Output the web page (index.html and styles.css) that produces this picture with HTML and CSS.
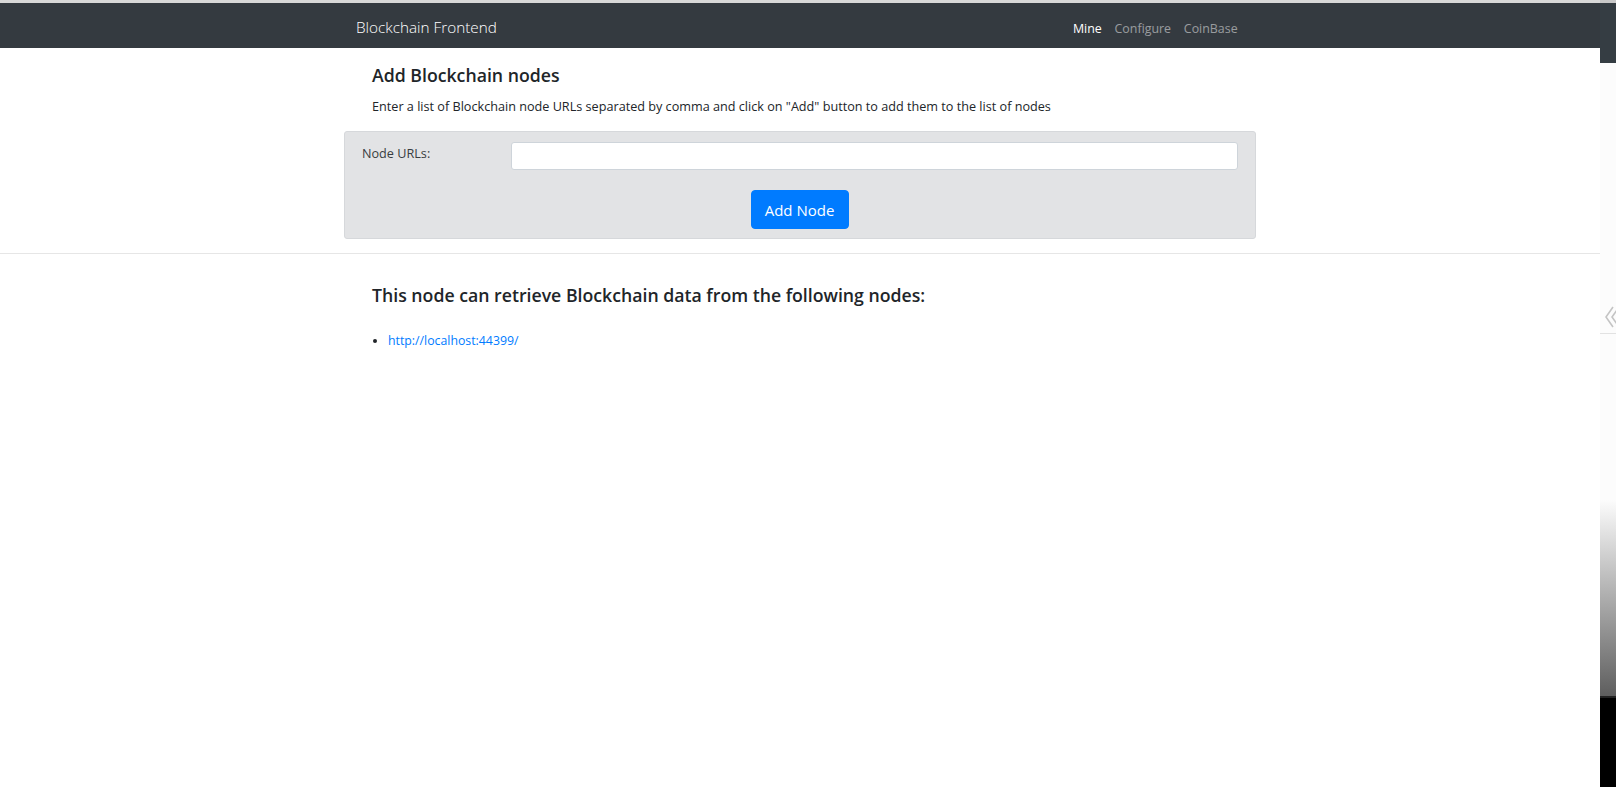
FILE: index.html
```html
<!DOCTYPE html>
<html lang="en">
<head>
<meta charset="utf-8">
<title>Blockchain Frontend</title>
<link rel="stylesheet" href="styles.css">
</head>
<body>
<div class="page">
  <div class="main">
    <nav class="navbar">
      <div class="nav-inner">
        <a class="brand" href="#">Blockchain Frontend</a>
        <ul class="nav-links">
          <li><a class="nav-link active" href="#">Mine</a></li>
          <li><a class="nav-link" href="#">Configure</a></li>
          <li><a class="nav-link" href="#">CoinBase</a></li>
        </ul>
      </div>
    </nav>

    <div class="container">
      <div class="intro">
        <h4 class="title">Add Blockchain nodes</h4>
        <p class="lead-text">Enter a list of Blockchain node URLs separated by comma and click on "Add" button to add them to the list of nodes</p>
      </div>
      <div class="panel">
        <div class="form-row">
          <label class="form-label" for="nodes">Node URLs:</label>
          <div class="form-field"><input class="form-input" id="nodes" type="text"></div>
        </div>
        <div class="form-actions">
          <button class="btn-primary" type="button">Add Node</button>
        </div>
      </div>
    </div>

    <hr class="divider">

    <div class="container">
      <div class="nodes">
        <h4 class="title">This node can retrieve Blockchain data from the following nodes:</h4>
        <ul class="node-list">
          <li><a href="#">http://localhost:44399/</a></li>
        </ul>
      </div>
    </div>
  </div>

  <aside class="side-strip">
    <div class="strip-top"></div>
    <div class="strip-light">
      <div class="strip-chevron">
        <svg width="16" height="24" viewBox="0 0 16 24"><path d="M8 2 L1 12 L8 22" fill="none" stroke="#c4c4c4" stroke-width="1.6"/><path d="M14 2 L7 12 L14 22" fill="none" stroke="#c4c4c4" stroke-width="1.6"/></svg>
      </div>
      <div class="strip-line"></div>
    </div>
    <div class="strip-gradient"></div>
    <div class="strip-dark"></div>
  </aside>
</div>
</body>
</html>
```

FILE: styles.css
```css
* { box-sizing: border-box; }
html, body { margin: 0; padding: 0; }
body {
  font-family: "Open Sans", "Noto Sans", "Liberation Sans", sans-serif;
  color: #212529;
  background: #fff;
  font-size: 12.65px;
  line-height: 1.5;
}
.page {
  display: flex;
  height: 787px;
  overflow: hidden;
}
.main {
  flex: 1;
  min-width: 0;
  border-top: 3px solid #d8d8d8;
}
.navbar {
  background: #343a40;
  height: 45px;
  display: flex;
  align-items: center;
}
.nav-inner {
  width: 912px;
  margin: 0 auto;
  padding: 0 12px;
  display: flex;
  align-items: center;
  justify-content: space-between;
}
.brand {
  color: #fff;
  text-decoration: none;
  font-size: 15.3px;
  font-weight: 300;
  padding-top: 3px;
}
.nav-links {
  list-style: none;
  margin: 0;
  padding: 8px 0 0;
  display: flex;
}
.nav-link {
  display: block;
  padding: 0 6.4px;
  color: rgba(255,255,255,.5);
  text-decoration: none;
  font-size: 12.4px;
}
.nav-link.active { color: #fff; }

.container {
  width: 912px;
  margin: 0 auto;
}
.intro, .nodes {
  padding-left: 28px;
}
.title {
  margin: 16px 0 10px;
  font-size: 17.7px;
  font-weight: 600;
  line-height: 23px;
  color: #212529;
}
.lead-text {
  margin: 0 0 15px;
  line-height: 19px;
}
.panel {
  background: #e2e3e5;
  border: 1px solid #d6d8db;
  border-radius: 3px;
  padding: 10px 17px 9px 16px;
}
.form-row {
  display: flex;
  align-items: center;
}
.form-label {
  width: 150px;
  flex: none;
  color: #383d41;
  padding-left: 1px;
  margin-top: -6px;
}
.form-field { flex: 1; }
.form-input {
  display: block;
  width: 100%;
  height: 28px;
  border: 1px solid #ced4da;
  border-radius: 3px;
  background: #fff;
  font: inherit;
  padding: 0 10px;
}
.form-actions {
  display: flex;
  justify-content: center;
  margin-top: 20px;
}
.btn-primary {
  background: #007bff;
  border: 1px solid #007bff;
  color: #fff;
  font-family: inherit;
  font-size: 15px;
  line-height: 24px;
  height: 39px;
  width: 98px;
  padding: 0;
  border-radius: 4px;
  cursor: pointer;
}
.divider {
  border: 0;
  border-top: 1px solid #e6e6e6;
  margin: 14px 0 0;
}
.nodes .title {
  margin-top: 30px;
  margin-bottom: 24px;
}
.node-list {
  margin: 0;
  padding-left: 16px;
  line-height: 19px;
  font-size: 12.3px;
}
.node-list a {
  color: #007bff;
  text-decoration: none;
}

.side-strip {
  width: 16px;
  flex: none;
  display: flex;
  flex-direction: column;
  background: #fcfcfc;
}
.strip-top {
  height: 63px;
  background: #353d43;
  border-top: 3px solid #c8c8c8;
}
.strip-light {
  height: 437px;
  position: relative;
}
.strip-chevron {
  position: absolute;
  left: 5px;
  top: 242px;
}
.strip-line {
  position: absolute;
  left: 0;
  right: 0;
  top: 270px;
  height: 1px;
  background: #e2e2e2;
}
.strip-gradient {
  height: 198px;
  background: linear-gradient(#fcfcfc, #5e5e5e);
  border-bottom: 2px solid #222;
}
.strip-dark {
  flex: 1;
  background: #000;
}
```
